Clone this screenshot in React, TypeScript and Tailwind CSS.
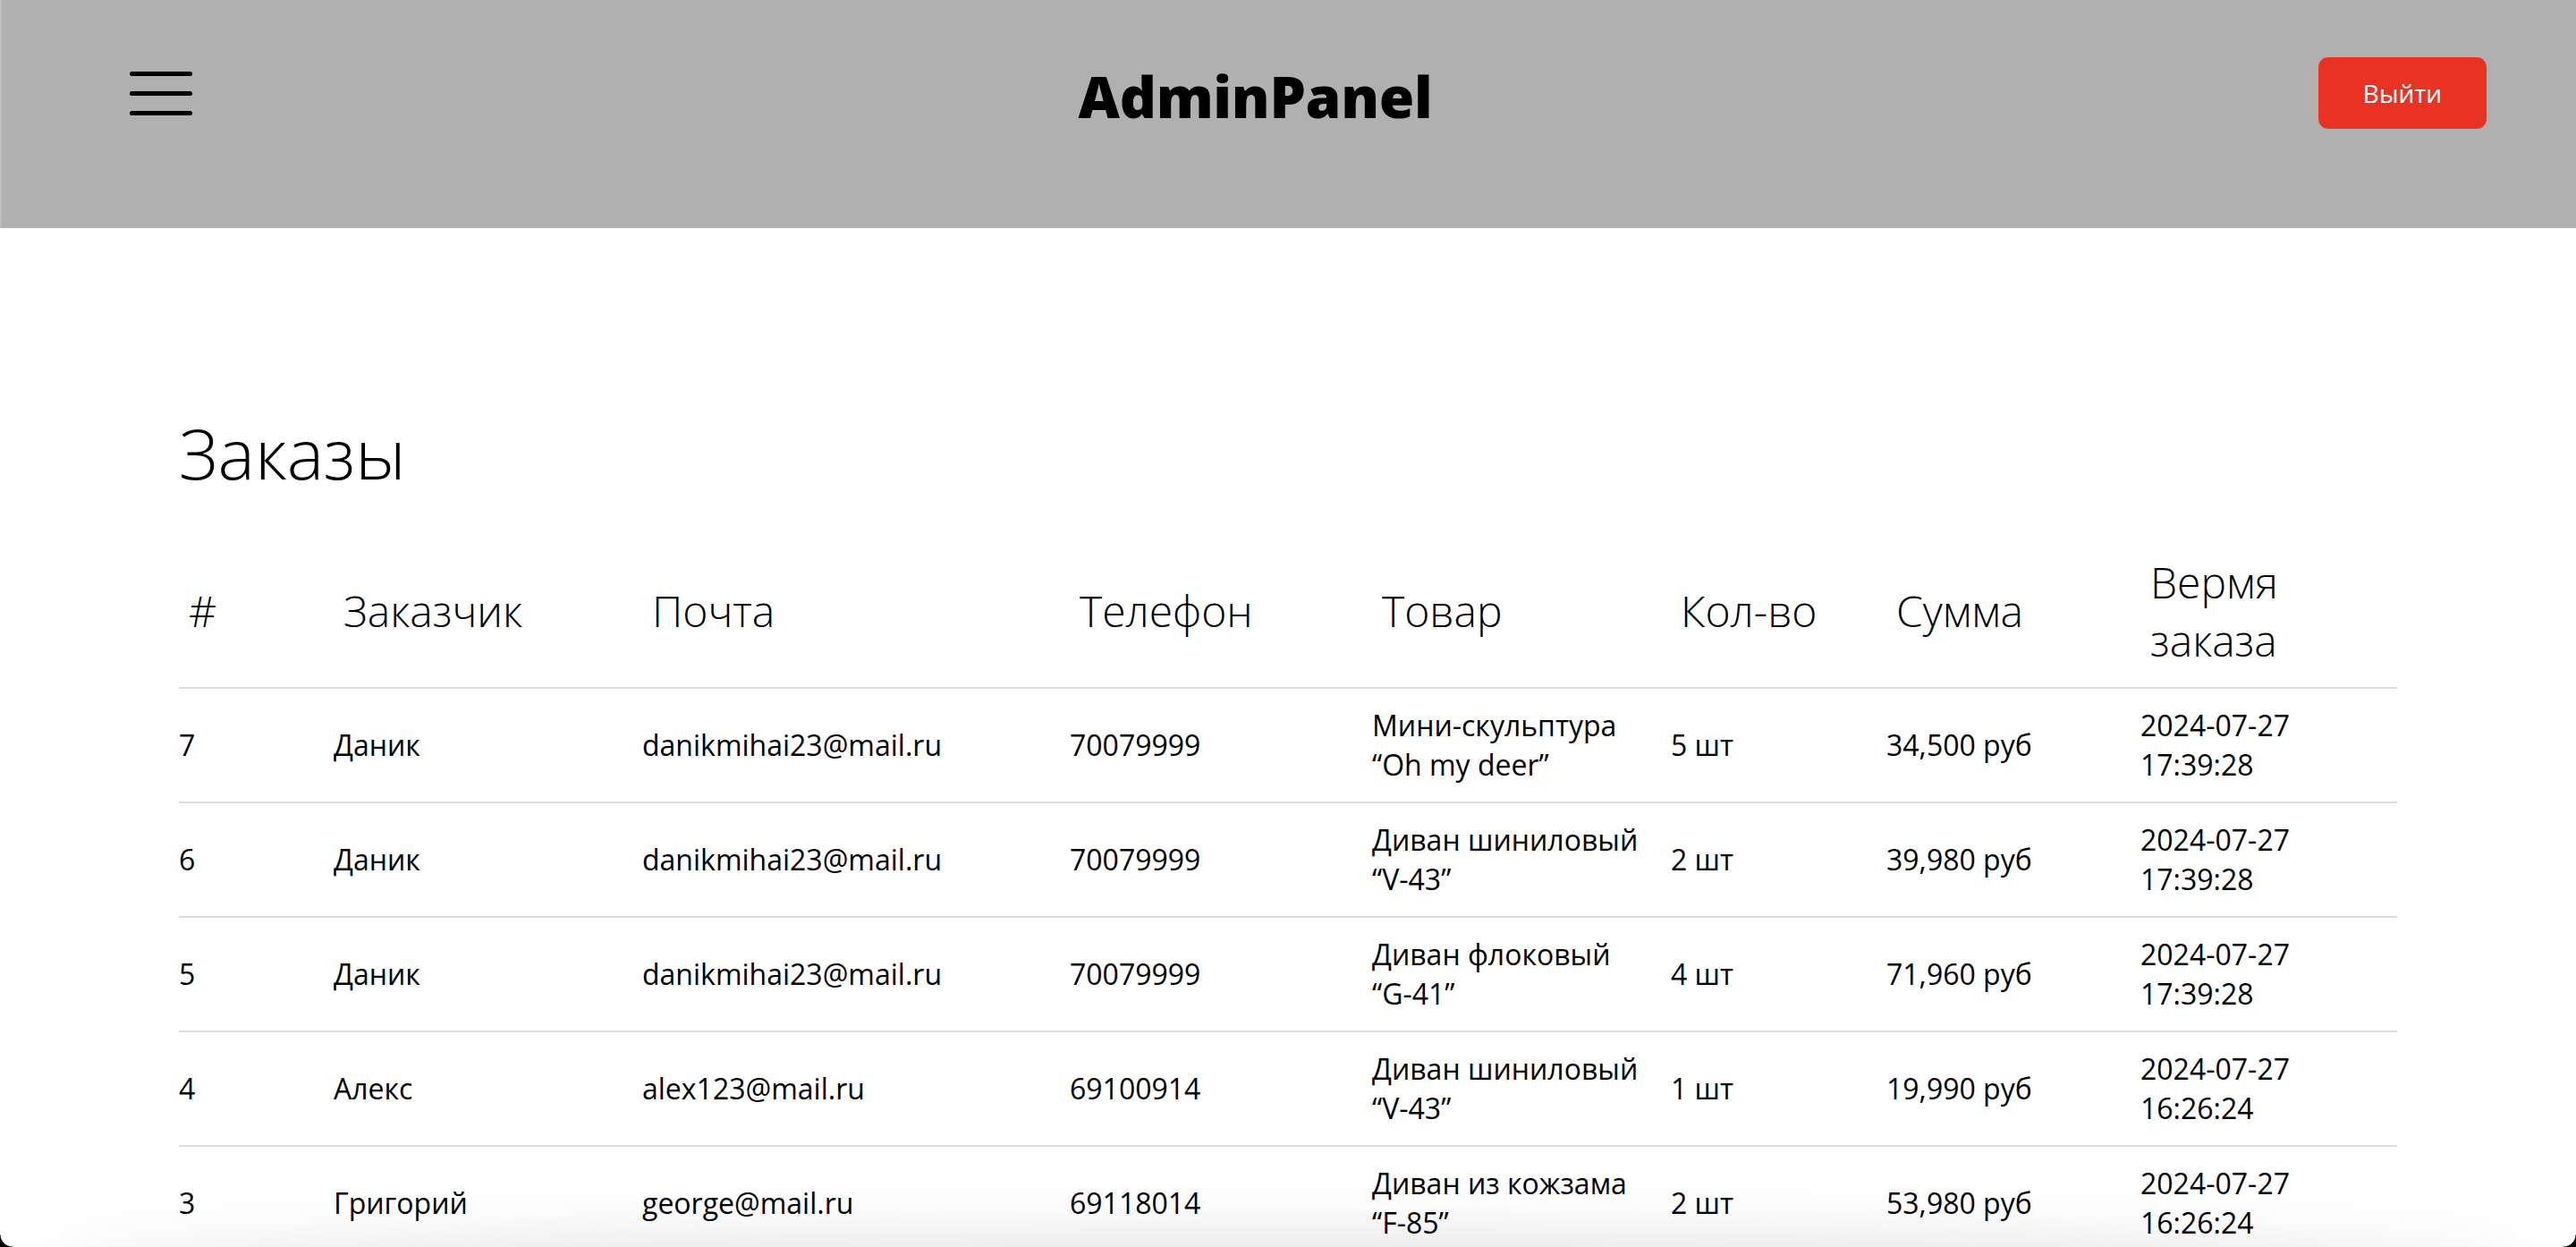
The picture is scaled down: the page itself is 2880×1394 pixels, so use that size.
import React from "react";

type Order = {
  id: string;
  name: string;
  email: string;
  phone: string;
  product: [string, string];
  qty: string;
  sum: string;
  date: string;
  time: string;
};

const orders: Order[] = [
  { id: "7", name: "Даник", email: "danikmihai23@mail.ru", phone: "70079999", product: ["Мини-скульптура", "“Oh my deer”"], qty: "5 шт", sum: "34,500 руб", date: "2024-07-27", time: "17:39:28" },
  { id: "6", name: "Даник", email: "danikmihai23@mail.ru", phone: "70079999", product: ["Диван шиниловый", "“V-43”"], qty: "2 шт", sum: "39,980 руб", date: "2024-07-27", time: "17:39:28" },
  { id: "5", name: "Даник", email: "danikmihai23@mail.ru", phone: "70079999", product: ["Диван флоковый", "“G-41”"], qty: "4 шт", sum: "71,960 руб", date: "2024-07-27", time: "17:39:28" },
  { id: "4", name: "Алекс", email: "alex123@mail.ru", phone: "69100914", product: ["Диван шиниловый", "“V-43”"], qty: "1 шт", sum: "19,990 руб", date: "2024-07-27", time: "16:26:24" },
  { id: "3", name: "Григорий", email: "george@mail.ru", phone: "69118014", product: ["Диван из кожзама", "“F-85”"], qty: "2 шт", sum: "53,980 руб", date: "2024-07-27", time: "16:26:24" },
];

const cols = "grid grid-cols-[173px_345px_478px_338px_334px_241px_284px_287px]";

export default function App() {
  return (
    <div className="min-h-screen bg-white text-black font-['Open_Sans',sans-serif]">
      <header className="h-[255px] bg-[#b0b0b0] pt-[64px] pl-[143px] pr-[100px] flex items-start justify-between border-l-2 border-[#bdbdbd]">
        <button className="h-[80px] w-[70px] flex flex-col justify-center gap-[17px]">
          <span className="block h-[5px] w-[70px] rounded-full bg-black" />
          <span className="block h-[5px] w-[70px] rounded-full bg-black" />
          <span className="block h-[5px] w-[70px] rounded-full bg-black" />
        </button>
        <div className="text-[64px] leading-[normal] font-extrabold tracking-[-0.3px]">AdminPanel</div>
        <button className="h-[80px] w-[188px] rounded-[11px] bg-[#e83323] text-white text-[28px] leading-[normal]">
          Выйти
        </button>
      </header>

      <main className="px-[200px] pt-[198px] pb-[60px]">
        <h1 className="text-[78px] leading-[normal] font-light mb-[38px]">Заказы</h1>

        <div className={`${cols} h-[173px] items-center border-b-2 border-[#dddddd] text-[48px] leading-[normal] font-light`}>
          <div className="pl-[11px]">#</div>
          <div className="pl-[11px]">Заказчик</div>
          <div className="pl-[11px]">Почта</div>
          <div className="pl-[11px]">Телефон</div>
          <div className="pl-[11px]">Товар</div>
          <div className="pl-[11px]">Кол-во</div>
          <div className="pl-[11px]">Сумма</div>
          <div className="pl-[11px]">
            Вермя
            <br />
            заказа
          </div>
        </div>

        {orders.map((o) => (
          <div
            key={o.id}
            className={`${cols} h-[128px] items-center border-b-2 border-[#dddddd] text-[32px] leading-[1.36]`}
          >
            <div>{o.id}</div>
            <div>{o.name}</div>
            <div>{o.email}</div>
            <div>{o.phone}</div>
            <div>
              {o.product[0]}
              <br />
              {o.product[1]}
            </div>
            <div>{o.qty}</div>
            <div>{o.sum}</div>
            <div>
              {o.date}
              <br />
              {o.time}
            </div>
          </div>
        ))}
      </main>

      <div className="pointer-events-none fixed left-[60px] right-[60px] bottom-[-60px] h-[60px] rounded-[50%] shadow-[0_0_70px_10px_rgba(0,0,0,0.12)]" />
      <div className="pointer-events-none fixed bottom-0 left-0 h-[14px] w-[14px] bg-[radial-gradient(circle_at_top_right,transparent_13px,#000_14px)]" />
      <div className="pointer-events-none fixed bottom-0 right-0 h-[14px] w-[14px] bg-[radial-gradient(circle_at_top_left,transparent_13px,#000_14px)]" />
    </div>
  );
}
